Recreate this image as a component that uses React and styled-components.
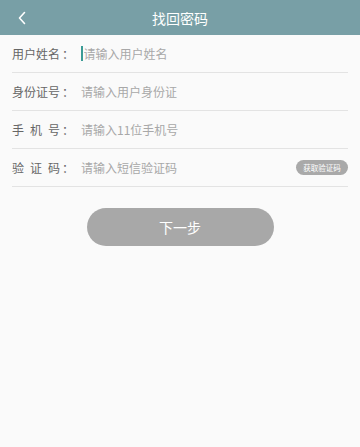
import React from 'react'
import styled, { createGlobalStyle } from 'styled-components'

const GlobalStyle = createGlobalStyle`
  html, body {
    margin: 0;
    padding: 0;
    background: #fafafa;
    font-family: "Noto Sans CJK SC", "Noto Sans", sans-serif;
  }
  * { box-sizing: border-box; }
`

const Page = styled.div`
  width: 360px;
  min-height: 447px;
  background: #fafafa;
`

const Header = styled.header`
  height: 35px;
  background: #789fa6;
  display: flex;
  align-items: center;
  justify-content: center;
  position: relative;
  color: #fff;
  font-size: 14px;
`

const Back = styled.button`
  position: absolute;
  left: 12px;
  top: 0;
  height: 35px;
  width: 20px;
  border: 0;
  background: none;
  padding: 0;
  display: flex;
  align-items: center;
  justify-content: center;
`

const Form = styled.div`
  padding: 0 12px;
`

const Row = styled.div`
  height: 38px;
  display: flex;
  align-items: center;
  border-bottom: 1px solid #e3e3e3;
`

const Label = styled.label`
  display: flex;
  width: 69px;
  font-size: 12px;
  color: #666;
  flex-shrink: 0;
`

const LabelName = styled.span`
  width: 48px;
  text-align: justify;
  text-align-last: justify;
`

const Colon = styled.span`
  margin-left: 2px;
`

const Caret = styled.span`
  width: 1.5px;
  height: 15px;
  background: #3a9b95;
  margin-right: 1px;
`

const Input = styled.input`
  flex: 1;
  min-width: 0;
  border: 0;
  outline: none;
  background: transparent;
  font-family: inherit;
  font-size: 12px;
  color: #333;
  padding: 0;
  &::placeholder {
    color: #a8a8a8;
  }
`

const CodeButton = styled.button`
  height: 15px;
  width: 52px;
  border: 0;
  border-radius: 8px;
  background: #a9a9a9;
  color: #fff;
  font-family: inherit;
  font-size: 7.5px;
  padding: 0;
  flex-shrink: 0;
`

const Submit = styled.button`
  display: block;
  margin: 21px auto 0;
  width: 187px;
  height: 38px;
  border: 0;
  border-radius: 19px;
  background: #a8a8a8;
  color: #fff;
  font-family: inherit;
  font-size: 14px;
`

const fields = [
  { name: '用户姓名', placeholder: '请输入用户姓名', focused: true },
  { name: '身份证号', placeholder: '请输入用户身份证' },
  { name: '手机号', placeholder: '请输入11位手机号' },
  { name: '验证码', placeholder: '请输入短信验证码', code: true }
]

export default function App() {
  return (
    <Page>
      <GlobalStyle />
      <Header>
        <Back aria-label="返回">
          <svg width="10" height="14" viewBox="0 0 10 14">
            <path d="M7.5 1.5 L2.5 7 L7.5 12.5" fill="none" stroke="#fff" strokeWidth="1.6" strokeLinecap="round" strokeLinejoin="round" />
          </svg>
        </Back>
        找回密码
      </Header>
      <Form>
        {fields.map(f => (
          <Row key={f.name}>
            <Label>
              <LabelName>{f.name}</LabelName>
              <Colon>：</Colon>
            </Label>
            {f.focused && <Caret />}
            <Input placeholder={f.placeholder} />
            {f.code && <CodeButton>获取验证码</CodeButton>}
          </Row>
        ))}
      </Form>
      <Submit>下一步</Submit>
    </Page>
  )
}
